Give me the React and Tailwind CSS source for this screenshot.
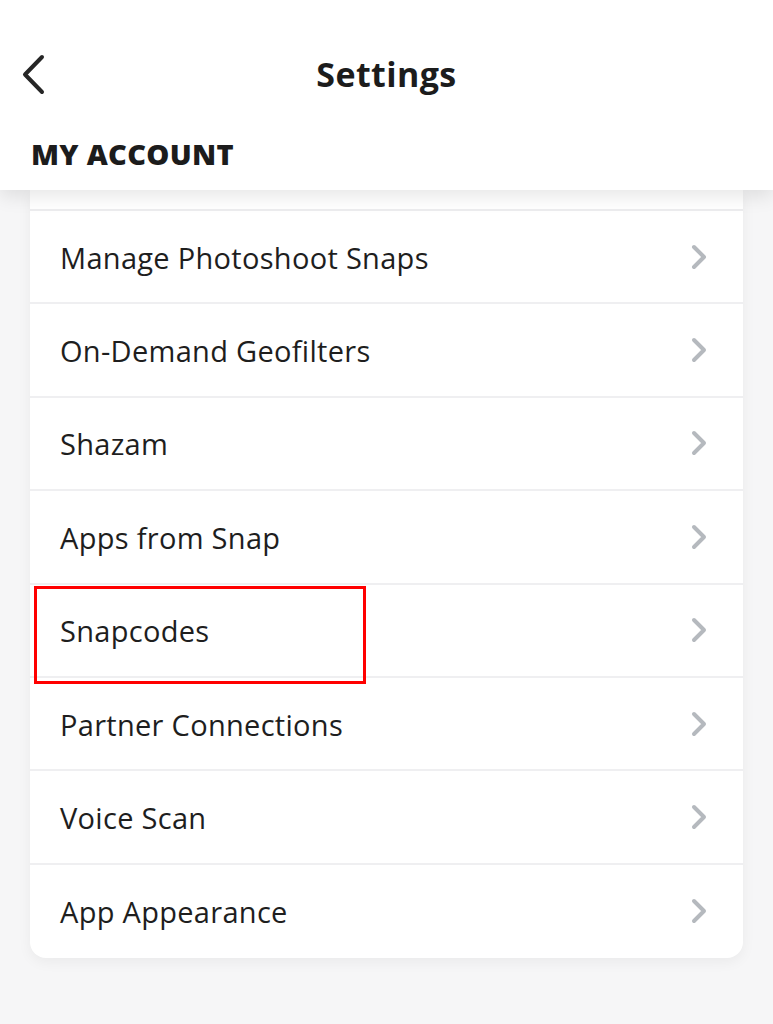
const rows = [
    "Manage Photoshoot Snaps",
    "On-Demand Geofilters",
    "Shazam",
    "Apps from Snap",
    "Snapcodes",
    "Partner Connections",
    "Voice Scan",
    "App Appearance",
];

function RowChevron() {
    return (
        <svg width="20" height="26" viewBox="0 0 20 26" className="shrink-0">
            <path
                d="M5 3 L15 13 L5 23"
                fill="none"
                stroke="#b5b9be"
                strokeWidth="4"
                strokeLinecap="round"
                strokeLinejoin="round"
            />
        </svg>
    );
}

export default function App() {
    return (
        <div
            className="w-[773px] h-[1024px] bg-[#f6f6f7] overflow-hidden"
            style={{ fontFamily: "'Open Sans', Lato, sans-serif" }}
        >
            {/* Header */}
            <div className="relative z-10 h-[190px] bg-white shadow-[0_6px_18px_rgba(0,0,0,0.10)]">
                <div className="relative flex items-center justify-center h-[148px]">
                    <svg
                        width="30"
                        height="42"
                        viewBox="0 0 30 42"
                        className="absolute left-[18px] top-[53px]"
                    >
                        <path
                            d="M24 4 L7 21.5 L24 39"
                            fill="none"
                            stroke="#262626"
                            strokeWidth="4"
                            strokeLinecap="round"
                            strokeLinejoin="round"
                        />
                    </svg>
                    <h1 className="text-[34px] leading-[40px] font-bold text-[#1c1c1c] tracking-[0.4px]">
                        Settings
                    </h1>
                </div>
                <div className="px-[31px] -mt-[12px] text-[29px] leading-[36px] font-extrabold text-[#1c1c1c] tracking-[0.3px]">
                    MY ACCOUNT
                </div>
            </div>

            {/* Card */}
            <div className="mx-[30px] bg-white rounded-b-[16px] shadow-[0_4px_14px_rgba(0,0,0,0.05)]">
                <div className="h-[21px] border-b-2 border-[#ececee]" />
                {rows.map((label, i) => (
                    <div
                        key={label}
                        className={`relative flex items-center justify-between h-[93.4px] pl-[30px] pr-[34px] ${
                            i < rows.length - 1 ? "border-b-2 border-[#efeff1]" : ""
                        }`}
                    >
                        <span className="text-[29px] leading-[38px] text-[#1e1e1e] tracking-[0.3px] pt-[2px]">
                            {label}
                        </span>
                        <RowChevron />
                        {label === "Snapcodes" && (
                            <div className="absolute left-[4px] top-[1px] w-[332px] h-[98px] border-[3px] border-[#ff0000]" />
                        )}
                    </div>
                ))}
            </div>
        </div>
    );
}
